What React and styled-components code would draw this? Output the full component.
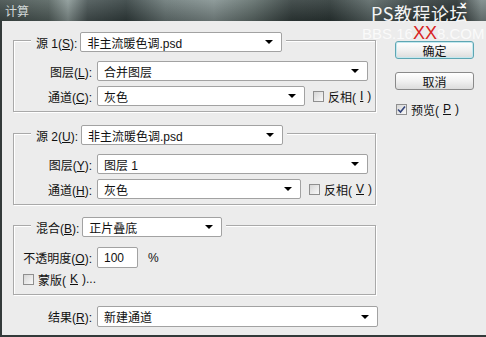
import React from "react";
import styled, { createGlobalStyle } from "styled-components";

const GlobalStyle = createGlobalStyle`
  html, body {
    margin: 0;
    padding: 0;
    background: #ececec;
  }
  body {
    font-family: "Liberation Sans", "Noto Sans CJK SC", sans-serif;
    font-size: 12px;
    color: #111;
  }
  u {
    text-decoration-thickness: 1px;
    text-underline-offset: 1px;
  }
`;

const Window = styled.div`
  position: relative;
  width: 486px;
  height: 337px;
  overflow: hidden;
  background: #ececec;
`;

const TitleBar = styled.div`
  height: 21px;
  display: flex;
  align-items: center;
  padding-left: 5px;
  color: #d2d8d8;
  font-size: 12px;
  background:
    linear-gradient(180deg, rgba(255, 255, 255, 0.1), rgba(0, 0, 0, 0.22)),
    linear-gradient(
      90deg,
      #424e4c 0%,
      #55625f 10%,
      #8a9896 14%,
      #485454 18%,
      #344040 26%,
      #6a7877 34%,
      #839190 44%,
      #606e6b 52%,
      #333e3d 60%,
      #2d3837 68%,
      #5a6766 76%,
      #394444 84%,
      #283131 94%,
      #7a8786 99%
    );
`;

const Body = styled.div`
  height: 314px;
  display: flex;
  border-left: 2px solid #333a3a;
  border-bottom: 2px solid #333a3a;
`;

const LeftCol = styled.div`
  width: 365px;
  margin-left: 11px;
  padding-top: 19px;
  display: flex;
  flex-direction: column;
`;

const Group = styled.div`
  width: 363px;
  box-sizing: border-box;
  margin-top: ${(p) => p.$top || 0}px;
  padding-bottom: ${(p) => p.$bottom || 5}px;
  border: 1px solid #a9a9a9;
  box-shadow: inset 1px 1px 0 #fff, 1px 1px 0 #fff;
  display: flex;
  flex-direction: column;
`;

const Legend = styled.div`
  display: flex;
  align-items: center;
  gap: 3px;
  height: 20px;
  width: fit-content;
  margin: -9px 0 0 17px;
  padding: 0 4px 0 5px;
  background: #ececec;
`;

const Row = styled.div`
  display: flex;
  align-items: center;
  height: ${(p) => p.$h || 20}px;
  margin-top: ${(p) => p.$top || 0}px;
  padding-left: ${(p) => p.$indent || 0}px;
`;

const Label = styled.span`
  width: 78px;
  margin-right: 5px;
  text-align: right;
  white-space: nowrap;
`;

const Select = styled.div`
  width: ${(p) => p.$w}px;
  height: ${(p) => p.$h || 20}px;
  box-sizing: border-box;
  display: flex;
  align-items: center;
  justify-content: space-between;
  padding: 0 8px 0 6px;
  background: #fff;
  border: 1px solid #a2a2a2;
  border-radius: 2px;
  white-space: nowrap;
`;

const Arrow = styled.span`
  width: 0;
  height: 0;
  border-left: 4px solid transparent;
  border-right: 4px solid transparent;
  border-top: 4px solid #000;
`;

const Input = styled.div`
  width: 41px;
  height: 21px;
  box-sizing: border-box;
  display: flex;
  align-items: center;
  padding-left: 6px;
  background: #fff;
  border: 1px solid #a2a2a2;
  border-radius: 2px;
`;

const Unit = styled.span`
  margin-left: 10px;
`;

const CheckLabel = styled.label`
  display: flex;
  align-items: center;
  gap: 4px;
  margin-left: ${(p) => p.$left || 0}px;
  white-space: nowrap;
`;

const Box = styled.span`
  width: 11px;
  height: 11px;
  box-sizing: border-box;
  display: flex;
  align-items: center;
  justify-content: center;
  border: 1px solid #8f8f8f;
  background: linear-gradient(135deg, #d6d6d6, #f9f9f9);
`;

const RightCol = styled.div`
  width: 79px;
  margin-left: 17px;
  padding-top: 20px;
  display: flex;
  flex-direction: column;
`;

const Button = styled.div`
  height: 18px;
  box-sizing: border-box;
  margin-top: ${(p) => p.$top || 0}px;
  display: flex;
  align-items: center;
  justify-content: center;
  border: 1px solid ${(p) => (p.$primary ? "#5ea6b3" : "#8a8a8a")};
  border-radius: 3px;
  background: linear-gradient(180deg, #ffffff 0%, #f1f1f1 50%, #dcdcdc 100%);
  box-shadow: ${(p) => (p.$primary ? "inset 0 0 0 1px #c4e8ef" : "none")};
`;

const PreviewRow = styled.div`
  margin-top: 12px;
  height: 14px;
  padding-left: 1px;
  display: flex;
  align-items: center;
`;

const Watermark = styled.div`
  position: absolute;
  top: 0;
  right: 18px;
  font-family: "Noto Sans CJK SC", sans-serif;
  font-size: 18px;
  line-height: 26px;
  color: #f4f4f4;
  letter-spacing: 0.5px;
`;

const Close = styled.div`
  position: absolute;
  top: 1px;
  left: 459px;
  font-family: "DejaVu Sans", sans-serif;
  font-size: 10px;
  font-weight: bold;
  line-height: 9px;
  color: #fff;
`;

const SiteMark = styled.div`
  position: absolute;
  top: 24px;
  left: 362px;
  font-family: "Liberation Sans", sans-serif;
  font-size: 15px;
  line-height: 18px;
  color: rgba(255, 255, 255, 0.75);
`;

const Red = styled.span`
  color: #d82424;
  font-size: 18px;
`;

function Check({ checked }) {
  return (
    <Box>
      {checked && (
        <svg width="9" height="9" viewBox="0 0 9 9">
          <path d="M1 4.5 L3.5 7 L8 1.5" fill="none" stroke="#33447a" strokeWidth="1.6" />
        </svg>
      )}
    </Box>
  );
}

function Drop({ w, h, children }) {
  return (
    <Select $w={w} $h={h}>
      <span>{children}</span>
      <Arrow />
    </Select>
  );
}

export default function App() {
  return (
    <Window>
      <GlobalStyle />
      <TitleBar>计算</TitleBar>
      <Body>
        <LeftCol>
          <Group>
            <Legend>
              <span>
                源 1(<u>S</u>):
              </span>
              <Drop w={202}>非主流暖色调.psd</Drop>
            </Legend>
            <Row $top={9}>
              <Label>
                图层(<u>L</u>):
              </Label>
              <Drop w={271}>合并图层</Drop>
            </Row>
            <Row $top={5}>
              <Label>
                通道(<u>C</u>):
              </Label>
              <Drop w={208}>灰色</Drop>
              <CheckLabel $left={8}>
                <Check />
                反相(<u>I</u>)
              </CheckLabel>
            </Row>
          </Group>

          <Group $top={21}>
            <Legend>
              <span>
                源 2(<u>U</u>):
              </span>
              <Drop w={202}>非主流暖色调.psd</Drop>
            </Legend>
            <Row $top={9}>
              <Label>
                图层(<u>Y</u>):
              </Label>
              <Drop w={271}>图层 1</Drop>
            </Row>
            <Row $top={5}>
              <Label>
                通道(<u>H</u>):
              </Label>
              <Drop w={204}>灰色</Drop>
              <CheckLabel $left={8}>
                <Check />
                反相(<u>V</u>)
              </CheckLabel>
            </Row>
          </Group>

          <Group $top={20} $bottom={8}>
            <Legend>
              <span>
                混合(<u>B</u>):
              </span>
              <Drop w={140}>正片叠底</Drop>
            </Legend>
            <Row $top={10} $h={21}>
              <Label>
                不透明度(<u>O</u>):
              </Label>
              <Input>100</Input>
              <Unit>%</Unit>
            </Row>
            <Row $top={4} $h={14} $indent={9}>
              <CheckLabel>
                <Check />
                蒙版(<u>K</u>)...
              </CheckLabel>
            </Row>
          </Group>

          <Row $top={11} $h={21} $indent={1}>
            <Label>
              结果(<u>R</u>):
            </Label>
            <Drop w={281} h={21}>
              新建通道
            </Drop>
          </Row>
        </LeftCol>

        <RightCol>
          <Button $primary>确定</Button>
          <Button $top={13}>取消</Button>
          <PreviewRow>
            <CheckLabel>
              <Check checked />
              预览(<u>P</u>)
            </CheckLabel>
          </PreviewRow>
        </RightCol>
      </Body>

      <Watermark>PS教程论坛</Watermark>
      <Close>×</Close>
      <SiteMark>
        BBS.16<Red>XX</Red>8.COM
      </SiteMark>
    </Window>
  );
}
